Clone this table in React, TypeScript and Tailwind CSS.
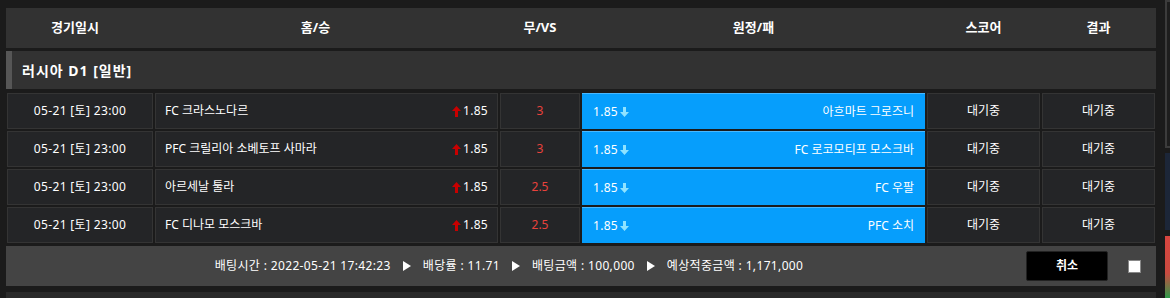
import { Fragment } from 'react';

type Match = {
  date: string;
  home: string;
  homeOdds: string;
  draw: string;
  awayOdds: string;
  away: string;
  score: string;
  result: string;
};

const matches: Match[] = [
  { date: '05-21 [토] 23:00', home: 'FC 크라스노다르', homeOdds: '1.85', draw: '3', awayOdds: '1.85', away: '아흐마트 그로즈니', score: '대기중', result: '대기중' },
  { date: '05-21 [토] 23:00', home: 'PFC 크릴리아 소베토프 사마라', homeOdds: '1.85', draw: '3', awayOdds: '1.85', away: 'FC 로코모티프 모스크바', score: '대기중', result: '대기중' },
  { date: '05-21 [토] 23:00', home: '아르세날 툴라', homeOdds: '1.85', draw: '2.5', awayOdds: '1.85', away: 'FC 우팔', score: '대기중', result: '대기중' },
  { date: '05-21 [토] 23:00', home: 'FC 디나모 모스크바', homeOdds: '1.85', draw: '2.5', awayOdds: '1.85', away: 'PFC 소치', score: '대기중', result: '대기중' },
];

const cols = 'grid grid-cols-[146px_343px_80px_343px_113px_113px] gap-x-[2px]';

function UpArrow() {
  return (
    <svg width="9" height="11" viewBox="0 0 9 11" className="mr-[2px]">
      <path d="M4.5 0 L9 5 L6 5 L6 11 L3 11 L3 5 L0 5 Z" fill="#c80000" />
    </svg>
  );
}

function DownArrow() {
  return (
    <svg width="9" height="10" viewBox="0 0 9 10" className="ml-[2px]">
      <path d="M3 0 L6 0 L6 5 L9 5 L4.5 10 L0 5 L3 5 Z" fill="#8fe3ff" />
    </svg>
  );
}

function Play() {
  return (
    <svg width="8" height="10" viewBox="0 0 8 10" className="mx-[12px]">
      <path d="M0 0 L8 5 L0 10 Z" fill="#ffffff" />
    </svg>
  );
}

export default function App() {
  const cell = 'flex h-[36px] items-center border border-[#343434] bg-[#242527]';

  return (
    <div
      className="flex h-[298px] w-[1170px] overflow-hidden bg-[#1b1b1b] text-[12px] text-white"
      style={{ fontFamily: '"Noto Sans", "Noto Sans CJK KR", sans-serif' }}
    >
      {/* 메인 패널 */}
      <div className="ml-[6px] w-[1150px] shrink-0 pt-[8px]">
        {/* Header */}
        <div className={`${cols} h-[40px] items-center bg-[#323232] px-[1px] text-[13px] font-bold`}>
          <div className="pr-[10px] text-center">경기일시</div>
          <div className="pr-[22px] text-center">홈/승</div>
          <div className="text-center">무/VS</div>
          <div className="text-center">원정/패</div>
          <div className="text-center">스코어</div>
          <div className="text-center">결과</div>
        </div>

        {/* League */}
        <div className="mt-[3px] flex h-[38px] items-center bg-[#323232]">
          <div className="h-full w-[6px] bg-[#565656]" />
          <span className="ml-[10px] text-[14px] font-bold tracking-[1px]">러시아 D1 [일반]</span>
        </div>

        {/* Rows */}
        <div className={`${cols} mt-[4px] gap-y-[2px] px-[1px]`}>
          {matches.map((m, i) => (
            <Fragment key={i}>
              <div className={`${cell} justify-center tracking-[0.35px]`}>{m.date}</div>
              <div className={`${cell} justify-between px-[9px]`}>
                <span>{m.home}</span>
                <span className="flex items-center tracking-[0.3px]">
                  <UpArrow />
                  {m.homeOdds}
                </span>
              </div>
              <div className={`${cell} justify-center text-[#e8423c]`}>{m.draw}</div>
              <div className="flex h-[36px] items-center justify-between border-t border-t-[#48b8ff] bg-[#069efc] px-[11px]">
                <span className="flex items-center tracking-[0.3px]">
                  {m.awayOdds}
                  <DownArrow />
                </span>
                <span>{m.away}</span>
              </div>
              <div className={`${cell} justify-center`}>{m.score}</div>
              <div className={`${cell} justify-center`}>{m.result}</div>
            </Fragment>
          ))}
        </div>

        {/* Footer */}
        <div className="mt-[3px] flex h-[40px] items-center bg-[#444444]">
          <div className="flex flex-1 items-center justify-center pr-[14px] tracking-[0.35px]">
            <span>배팅시간 : 2022-05-21 17:42:23</span>
            <Play />
            <span>배당률 : 11.71</span>
            <Play />
            <span>배팅금액 : 100,000</span>
            <Play />
            <span>예상적중금액 : 1,171,000</span>
          </div>
          <button
            type="button"
            className="h-[30px] w-[82px] rounded-[2px] border border-[#222] bg-black text-[12px] font-bold text-white"
          >
            취소
          </button>
          <div className="ml-[20px] mr-[15px] h-[13px] w-[13px] border border-[#888] bg-white" />
        </div>

        <div className="mt-[6px] h-[20px] bg-[#2a2a2a]" />
      </div>

      {/* 오른쪽 패널 (잘림) */}
      <div className="ml-[9px] flex w-[40px] shrink-0 flex-col">
        <div className="h-[148px] border-2 border-[#3c3c3c] bg-[#1e1e1e]" />
        <div className="mt-[5px] h-[77px] bg-[#1c2638]" />
        <div className="mt-[6px] h-[62px] bg-[linear-gradient(180deg,#d8453f_0%,#c94a40_60%,#2e9a4a_100%)]" />
      </div>
    </div>
  );
}
